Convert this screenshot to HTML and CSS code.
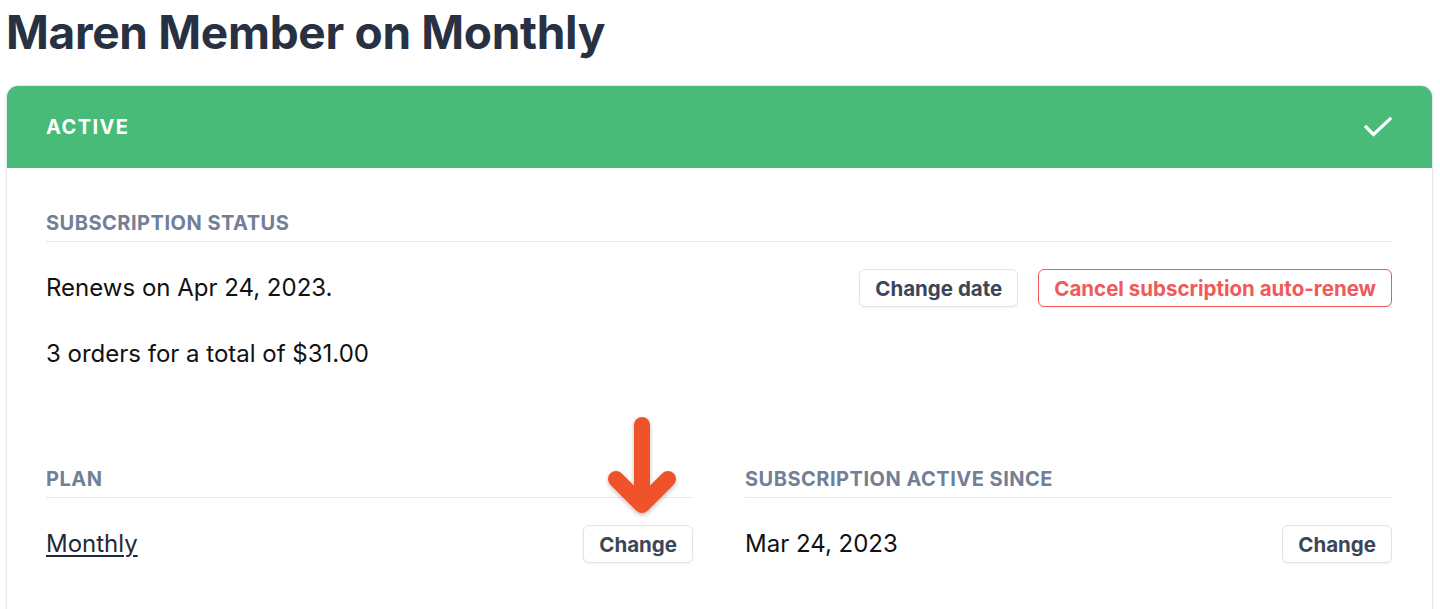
FILE: index.html
```html
<!DOCTYPE html>
<html>
<head>
<meta charset="utf-8">
<link rel="stylesheet" href="styles.css">
</head>
<body>
<h1 class="title">Maren Member on Monthly</h1>
<div class="card">
  <div class="card-head">
    <span class="status">ACTIVE</span>
    <svg class="check" width="28" height="22" viewBox="0 0 28 22"><path d="M2 11 L9.5 18.5 L26 3" fill="none" stroke="#fff" stroke-width="3.2" stroke-linecap="square"/></svg>
  </div>
  <div class="card-body">
    <div class="label">Subscription status</div>
    <div class="row">
      <span class="text">Renews on Apr 24, 2023.</span>
      <div class="actions">
        <button class="btn">Change date</button>
        <button class="btn btn-danger">Cancel subscription auto-renew</button>
      </div>
    </div>
    <div class="text totals">3 orders for a total of $31.00</div>
    <div class="cols">
      <div class="col">
        <div class="label">Plan</div>
        <div class="row">
          <a class="text link" href="#">Monthly</a>
          <button class="btn">Change</button>
        </div>
        <svg class="arrow" width="90" height="110" viewBox="0 0 90 110">
          <defs><filter id="sh" x="-20%" y="-20%" width="140%" height="140%"><feDropShadow dx="0" dy="2" stdDeviation="2" flood-color="#000" flood-opacity="0.25"/></filter></defs>
          <g filter="url(#sh)" fill="none" stroke="#f0522a" stroke-width="16" stroke-linecap="round" stroke-linejoin="round">
            <path d="M45 12 V88"/>
            <path d="M19 66 L45 92 L71 66"/>
          </g>
        </svg>
      </div>
      <div class="col">
        <div class="label">Subscription active since</div>
        <div class="row">
          <span class="text">Mar 24, 2023</span>
          <button class="btn">Change</button>
        </div>
      </div>
    </div>
  </div>
</div>
</body>
</html>
```

FILE: styles.css
```css
html, body {
  margin: 0;
  padding: 0;
  background: #fff;
}
body {
  padding: 0 6px;
  font-family: Inter, Lato, sans-serif;
  color: #1a202c;
  overflow: hidden;
}
.title {
  margin: 0;
  font-size: 46px;
  line-height: 64px;
  font-weight: 700;
  color: #283142;
  letter-spacing: -0.3px;
}
.card {
  margin-top: 21px;
  width: 1427px;
  box-sizing: border-box;
  border: 1px solid #e2e8f0;
  border-radius: 12px;
  box-shadow: 0 1px 3px rgba(0,0,0,0.08);
  height: 560px;
  overflow: hidden;
}
.card-head {
  height: 83px;
  margin: -1px -1px 0 -1px;
  background: #48bb78;
  border-radius: 12px 12px 0 0;
  display: flex;
  align-items: center;
  justify-content: space-between;
  padding: 0 40px;
}
.status {
  color: #fff;
  font-weight: 700;
  font-size: 20px;
  letter-spacing: 1.4px;
}
.check { display: block; margin-right: 1px; }
.card-body {
  padding: 43px 40px 0 39px;
}
.label {
  font-size: 20px;
  line-height: 24px;
  font-weight: 700;
  color: #718096;
  text-transform: uppercase;
  letter-spacing: 0.5px;
  padding-bottom: 6px;
  border-bottom: 1px solid #e2e8f0;
}
.row {
  margin-top: 27px;
  display: flex;
  align-items: center;
  justify-content: space-between;
  height: 38px;
}
.text {
  font-size: 24px;
  line-height: 30px;
  color: #111;
}
.link {
  color: #1f2937;
  text-decoration: underline;
  text-underline-offset: 3px;
  text-decoration-thickness: 1.5px;
}
.actions {
  display: flex;
  gap: 20px;
}
.btn {
  height: 38px;
  box-sizing: border-box;
  padding: 0 15px;
  border: 1px solid #dde3ec;
  border-radius: 6px;
  background: #fff;
  font-family: inherit;
  font-weight: 700;
  font-size: 20.5px;
  color: #3b4658;
  box-shadow: 0 1px 2px rgba(0,0,0,0.05);
}
.btn-danger {
  color: #f05a5a;
  border-color: #f05a5a;
}
.totals {
  margin-top: 32px;
}
.cols {
  margin-top: 98px;
  display: grid;
  grid-template-columns: 1fr 1fr;
  gap: 52px;
}
.col {
  position: relative;
}
.arrow {
  position: absolute;
  left: 551px;
  top: -54px;
}
```
